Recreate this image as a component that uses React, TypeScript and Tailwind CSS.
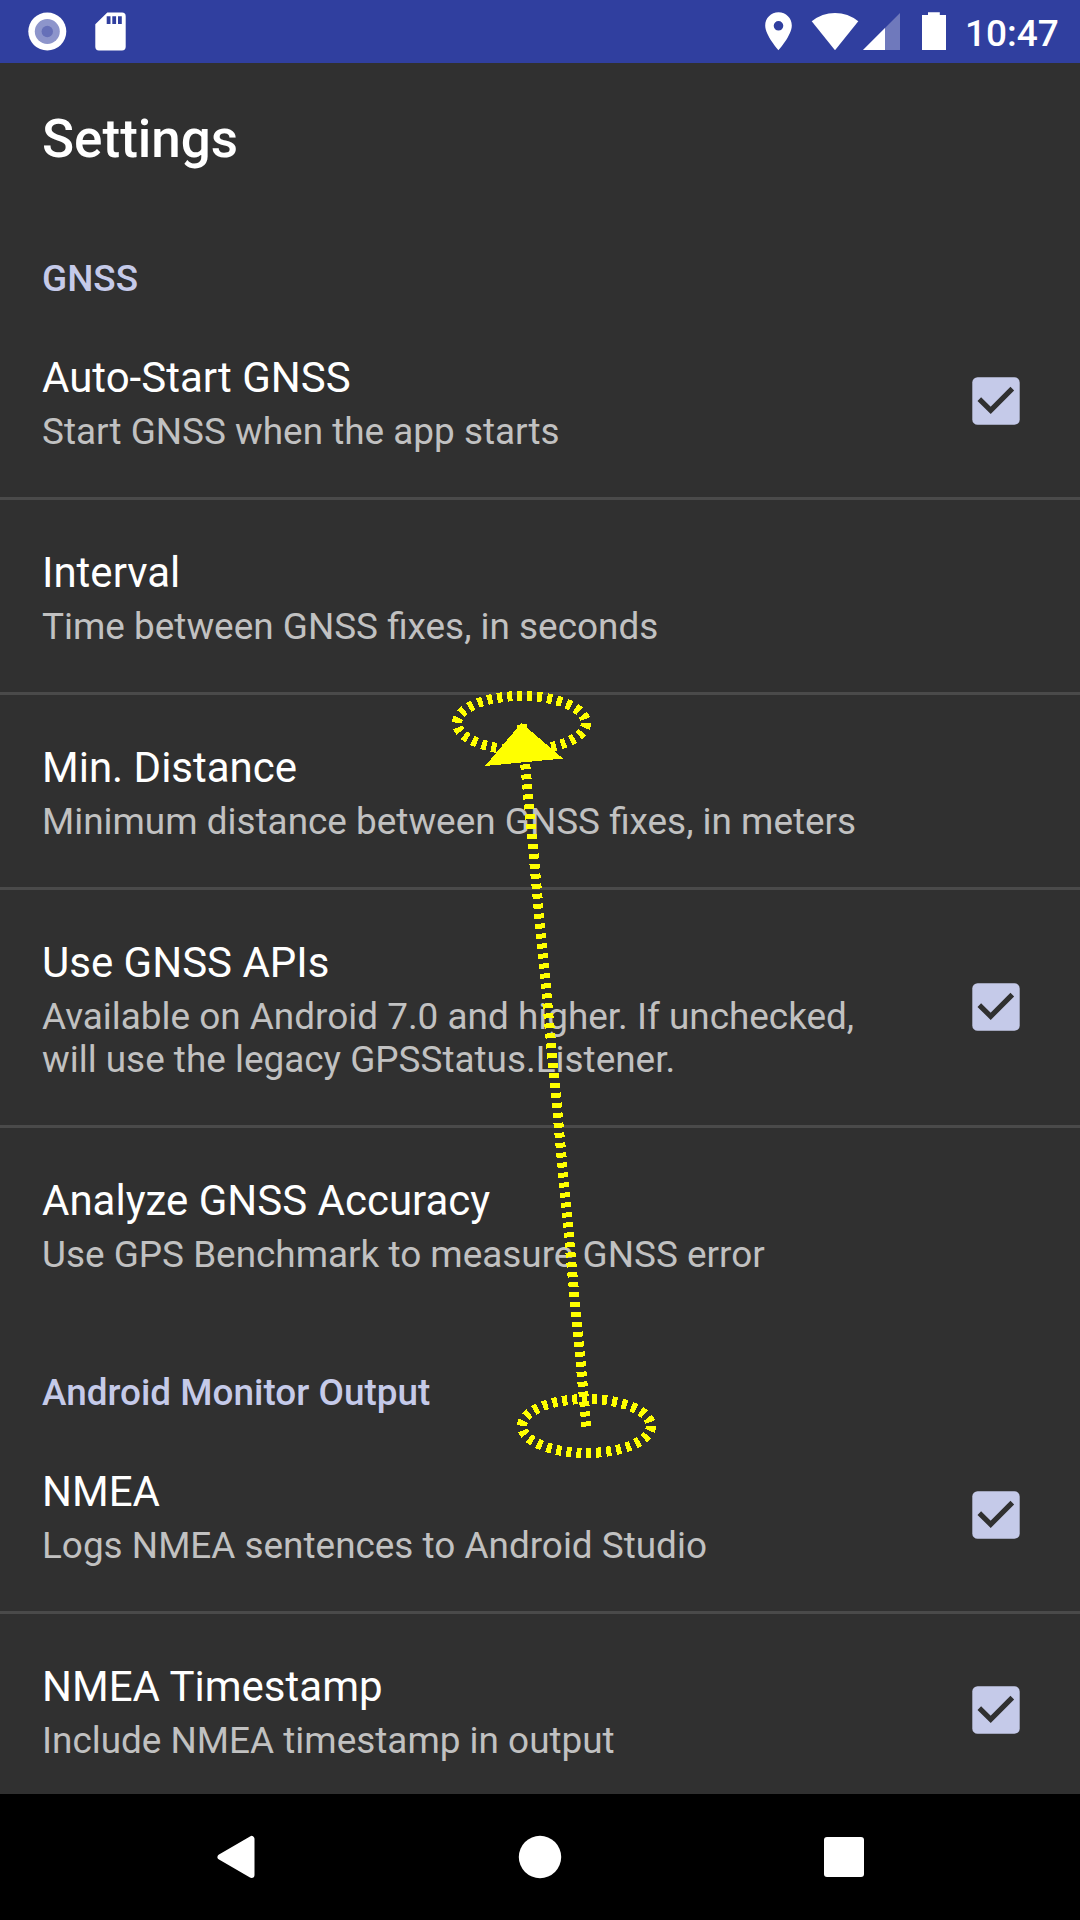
import React from "react";

function Checkbox() {
  return (
    <svg className="mb-[0.5px] block h-12 w-12 shrink-0" viewBox="0 0 48 48">
      <rect x="0.3" y="0.3" width="47.4" height="47.4" rx="5.3" fill="#c5cae9" />
      <path d="M7.3 22.2 L18.7 33.3 L40.3 11.7" fill="none" stroke="#303030" strokeWidth="5.2" />
    </svg>
  );
}

function Item({ title, lines, checked }: { title: string; lines: string[]; checked?: boolean }) {
  return (
    <div className="flex items-center justify-between pl-[42px] pr-[60px]">
      <div className="pt-[48px] pb-[42px]">
        <div className="h-[57px] whitespace-nowrap text-[42px] leading-[49px] text-white">{title}</div>
        <div className="pb-[2px]">
          {lines.map((l) => (
            <div key={l} className="h-[43px] whitespace-nowrap text-[36.9px] leading-[43px] text-[#c1c1c1]">{l}</div>
          ))}
        </div>
      </div>
      {checked && <Checkbox />}
    </div>
  );
}

function Divider() {
  return <div className="h-[3px] bg-[#4a4a4a]" />;
}

function Header({ text }: { text: string }) {
  return (
    <div className="h-[95px] pt-[47px] pl-[42px] text-[36.9px] font-medium leading-[43px] text-[#c5cae9]">{text}</div>
  );
}

export default function App() {
  return (
    <div className="relative flex h-[1920px] w-[1080px] flex-col overflow-hidden bg-[#303030] font-[Roboto,sans-serif]">
      <div className="flex h-[63px] shrink-0 bg-[#303f9f]">
        <svg className="block h-[63px] w-[760px]" viewBox="0 0 760 63">
          <circle cx="47.3" cy="31.5" r="19" fill="#fff" />
          <circle cx="47.3" cy="31.5" r="12.5" fill="#8d95cb" />
          <circle cx="47.3" cy="31.5" r="5.7" fill="#6670b8" />
          <path fillRule="evenodd" fill="#fff" d="M107.3 12.5H122a3.7 3.7 0 0 1 3.7 3.7V46.8a3.7 3.7 0 0 1-3.7 3.7H99a3.7 3.7 0 0 1-3.7-3.7V24.3zM106.7 16.3v7.7h3.8v-7.7zM112.3 16.3v7.7h3.8v-7.7zM118 16.3v7.7h3.8v-7.7z" />
        </svg>
        <svg className="block h-[63px] w-[205px]" viewBox="760 0 205 63">
          <path fillRule="evenodd" fill="#fff" d="M778.5 12.3C771 12.3 765.2 18.2 765.2 25.6C765.2 35.5 778.5 50.3 778.5 50.3S791.8 35.5 791.8 25.6C791.8 18.2 786 12.3 778.5 12.3zM778.5 21a4.8 4.8 0 1 1 0 9.6a4.8 4.8 0 1 1 0-9.6z" />
          <path fill="#fff" d="M811.7 21.3Q822 13 835 13T858.3 21.3L835 50.3z" />
          <path fill="#6f79bc" d="M900 13V50H863z" />
          <path fill="#fff" d="M885 28V50H863z" />
          <path fill="#fff" d="M928 12.3h11.8v2.7h6.2v35h-24v-35h6z" />
        </svg>
        <div className="pt-[12px] text-[37px] font-medium leading-[43px] text-white">10:47</div>
      </div>
      <div className="h-[147px] shrink-0 pl-[42px] pt-[45px] text-[53px] font-medium leading-[62px] text-white">Settings</div>
      <div className="h-[1584px] shrink-0 overflow-hidden">
        <Header text="GNSS" />
        <Item title="Auto-Start GNSS" lines={["Start GNSS when the app starts"]} checked />
        <Divider />
        <Item title="Interval" lines={["Time between GNSS fixes, in seconds"]} />
        <Divider />
        <Item title="Min. Distance" lines={["Minimum distance between GNSS fixes, in meters"]} />
        <Divider />
        <Item title="Use GNSS APIs" lines={["Available on Android 7.0 and higher. If unchecked,", "will use the legacy GPSStatus.Listener."]} checked />
        <Divider />
        <Item title="Analyze GNSS Accuracy" lines={["Use GPS Benchmark to measure GNSS error"]} />
        <div className="pt-1">
          <Header text="Android Monitor Output" />
        </div>
        <Item title="NMEA" lines={["Logs NMEA sentences to Android Studio"]} checked />
        <Divider />
        <Item title="NMEA Timestamp" lines={["Include NMEA timestamp in output"]} checked />
      </div>
      <div className="h-[126px] shrink-0 bg-black">
        <svg className="block h-[126px] w-[1080px]" viewBox="0 1794 1080 126">
          <path fill="#fff" stroke="#fff" strokeWidth="6" strokeLinejoin="round" d="M220.5 1857L251.5 1839V1875z" />
          <circle cx="540" cy="1857" r="21.2" fill="#fff" />
          <rect x="824" y="1837" width="40" height="40" rx="3" fill="#fff" />
        </svg>
      </div>
      <svg className="pointer-events-none absolute left-0 top-0 h-[1920px] w-[1080px]" viewBox="0 0 1080 1920" shapeRendering="crispEdges">
        <g fill="none" stroke="#ff0" strokeWidth="10" strokeDasharray="5 5">
          <ellipse cx="521.5" cy="723" rx="64.5" ry="27" />
          <ellipse cx="586.5" cy="1426" rx="64.5" ry="27" />
          <path d="M586.5 1426.5L521.5 724" />
        </g>
        <path fill="#ff0" d="M521.5 723L563 758.5L485 766z" />
      </svg>
    </div>
  );
}
